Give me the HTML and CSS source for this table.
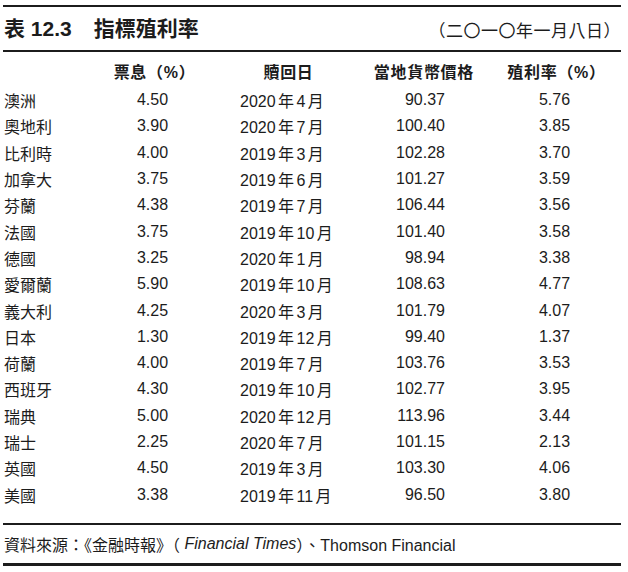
FILE: index.html
```html
<!DOCTYPE html>
<html lang="zh-Hant">
<head>
<meta charset="utf-8">
<link rel="stylesheet" href="styles.css">
</head>
<body>
<div class="page">
  <div class="titlebar">
    <h1 class="title"><span class="tno">表 12.3</span><span class="tname">指標殖利率</span></h1>
    <span class="date">（二〇一〇年一月八日）</span>
  </div>
  <div class="table">
    <div class="row head">
      <div class="c1"></div>
      <div class="c2">票息（%）</div>
      <div class="c3">贖回日</div>
      <div class="c4">當地貨幣價格</div>
      <div class="c5">殖利率（%）</div>
    </div>
    <div class="row"><div class="c1">澳洲</div><div class="c2">4.50</div><div class="c3">2020 年 4 月</div><div class="c4">90.37</div><div class="c5">5.76</div></div>
    <div class="row"><div class="c1">奧地利</div><div class="c2">3.90</div><div class="c3">2020 年 7 月</div><div class="c4">100.40</div><div class="c5">3.85</div></div>
    <div class="row"><div class="c1">比利時</div><div class="c2">4.00</div><div class="c3">2019 年 3 月</div><div class="c4">102.28</div><div class="c5">3.70</div></div>
    <div class="row"><div class="c1">加拿大</div><div class="c2">3.75</div><div class="c3">2019 年 6 月</div><div class="c4">101.27</div><div class="c5">3.59</div></div>
    <div class="row"><div class="c1">芬蘭</div><div class="c2">4.38</div><div class="c3">2019 年 7 月</div><div class="c4">106.44</div><div class="c5">3.56</div></div>
    <div class="row"><div class="c1">法國</div><div class="c2">3.75</div><div class="c3">2019 年 10 月</div><div class="c4">101.40</div><div class="c5">3.58</div></div>
    <div class="row"><div class="c1">德國</div><div class="c2">3.25</div><div class="c3">2020 年 1 月</div><div class="c4">98.94</div><div class="c5">3.38</div></div>
    <div class="row"><div class="c1">愛爾蘭</div><div class="c2">5.90</div><div class="c3">2019 年 10 月</div><div class="c4">108.63</div><div class="c5">4.77</div></div>
    <div class="row"><div class="c1">義大利</div><div class="c2">4.25</div><div class="c3">2020 年 3 月</div><div class="c4">101.79</div><div class="c5">4.07</div></div>
    <div class="row"><div class="c1">日本</div><div class="c2">1.30</div><div class="c3">2019 年 12 月</div><div class="c4">99.40</div><div class="c5">1.37</div></div>
    <div class="row"><div class="c1">荷蘭</div><div class="c2">4.00</div><div class="c3">2019 年 7 月</div><div class="c4">103.76</div><div class="c5">3.53</div></div>
    <div class="row"><div class="c1">西班牙</div><div class="c2">4.30</div><div class="c3">2019 年 10 月</div><div class="c4">102.77</div><div class="c5">3.95</div></div>
    <div class="row"><div class="c1">瑞典</div><div class="c2">5.00</div><div class="c3">2020 年 12 月</div><div class="c4">113.96</div><div class="c5">3.44</div></div>
    <div class="row"><div class="c1">瑞士</div><div class="c2">2.25</div><div class="c3">2020 年 7 月</div><div class="c4">101.15</div><div class="c5">2.13</div></div>
    <div class="row"><div class="c1">英國</div><div class="c2">4.50</div><div class="c3">2019 年 3 月</div><div class="c4">103.30</div><div class="c5">4.06</div></div>
    <div class="row"><div class="c1">美國</div><div class="c2">3.38</div><div class="c3">2019 年 11 月</div><div class="c4">96.50</div><div class="c5">3.80</div></div>
  </div>
  <div class="source">資料來源：《金融時報》（ <i>Financial Times</i>）、Thomson Financial</div>
</div>
</body>
</html>
```
FILE: styles.css
```css
html, body {
  margin: 0;
  padding: 0;
  background: #fff;
}
body {
  font-family: "Liberation Sans", "Noto Sans CJK TC", sans-serif;
  color: #1c1c1c;
  width: 628px;
  text-spacing-trim: space-all;
}
.page {
  margin: 5px 7px 0 3px;
}
.titlebar {
  border-top: 2px solid #1c1c1c;
  border-bottom: 2px solid #1c1c1c;
  height: 43px;
  display: flex;
  align-items: center;
  justify-content: space-between;
}
.title {
  margin: 0 0 0 1px;
  font-size: 21px;
  font-weight: bold;
  display: flex;
  gap: 22px;
  line-height: 1;
}
.date {
  font-size: 17px;
  letter-spacing: 0.5px;
  margin-top: 1px;
}
.table {
  padding: 6px 0 15px;
  border-bottom: 2px solid #1c1c1c;
  font-size: 16px;
}
.row {
  display: grid;
  grid-template-columns: 97px 105px 132px 151px 1fr;
  height: 26.3px;
  align-items: center;
}
.row.head {
  font-weight: bold;
  margin-bottom: 3px;
  height: 26px;
  letter-spacing: 0.7px;
}
.c1 {
  padding-left: 1px;
}
.c2 {
  text-align: center;
}
.c3 {
  padding-left: 35px;
  white-space: pre;
  word-spacing: -2px;
}
.c4 {
  text-align: right;
  padding-right: 43px;
}
.c5 {
  text-align: center;
}
.head .c2 {
  padding-left: 4px;
}
.head .c3 {
  text-align: center;
}
.head .c4 {
  padding-right: 14px;
}
.head .c5 {
  padding-left: 4px;
}
.source {
  font-size: 16px;
  height: 38px;
  display: flex;
  align-items: center;
  padding-left: 1px;
  border-bottom: 3px solid #1c1c1c;
  white-space: pre;
  text-spacing-trim: normal;
}
.source i {
  font-style: italic;
}
```
